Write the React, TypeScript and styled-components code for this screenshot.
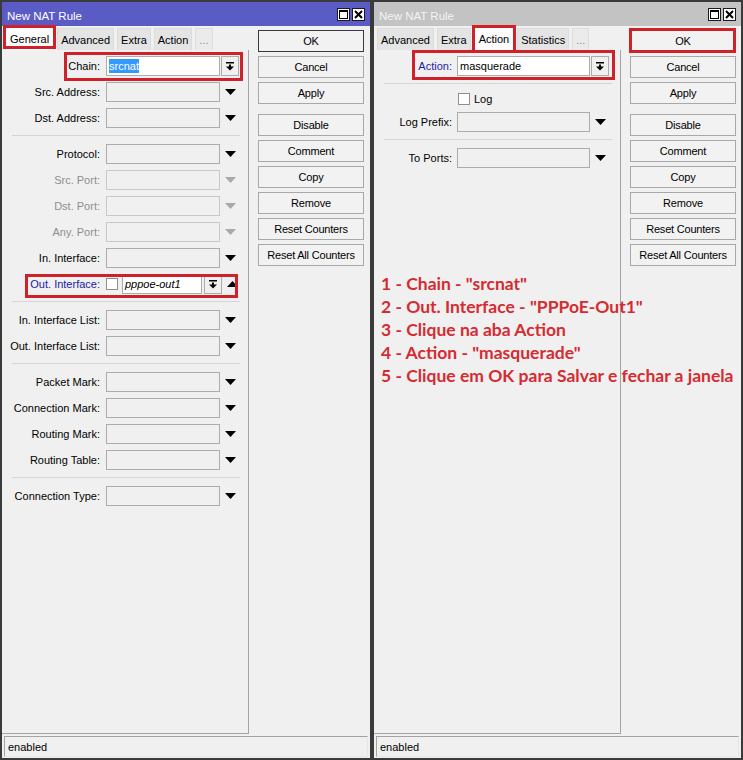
import React from 'react';
import styled, { createGlobalStyle } from 'styled-components';

const GlobalStyle = createGlobalStyle`
  html, body { margin: 0; padding: 0; background: #f0f0f0; }
  body {
    font-family: "Liberation Sans", Arial, sans-serif;
    font-size: 11px;
    color: #000;
  }
`;

const RED = '#cf2129';

const Desktop = styled.div`
  display: flex;
  width: 743px;
  height: 760px;
`;

const Win = styled.div<{ $w: number }>`
  position: relative;
  width: ${p => p.$w}px;
  height: 760px;
  box-sizing: border-box;
  border: 2px solid #3a3a3a;
  background: #f0f0f0;
  display: flex;
  flex-direction: column;
`;

const TitleBar = styled.div<{ $active: boolean }>`
  height: 24px;
  flex-shrink: 0;
  display: flex;
  align-items: center;
  justify-content: space-between;
  padding: 1px 5px 0 5px;
  box-sizing: border-box;
  background: ${p => (p.$active ? '#5b5bc6' : '#c3c3c3')};
  color: ${p => (p.$active ? '#ffffff' : '#f4f4f4')};
  font-size: 11.5px;
`;

const TitleText = styled.span`
  padding-top: 2px;
`;

const TitleButtons = styled.div`
  display: flex;
  gap: 2px;
`;

const TitleBtn = styled.div`
  width: 13px;
  height: 13px;
  box-sizing: border-box;
  border: 1px solid #1c1c1c;
  background: #fff;
  display: flex;
  align-items: center;
  justify-content: center;
`;

const Body = styled.div`
  flex: 1;
  min-height: 0;
  display: flex;
`;

const LeftCol = styled.div`
  width: 247px;
  flex-shrink: 0;
  display: flex;
  flex-direction: column;
`;

const TabStrip = styled.div`
  height: 24px;
  flex-shrink: 0;
  display: flex;
  align-items: flex-end;
  padding-left: 3px;
`;

const Tab = styled.div<{ $on?: boolean; $muted?: boolean }>`
  position: relative;
  box-sizing: border-box;
  height: ${p => (p.$on ? 24 : 22)}px;
  padding: 0 ${p => (p.$on ? 4 : 3)}px;
  margin-right: 3px;
  display: flex;
  align-items: center;
  border: 1px solid ${p => (p.$on ? '#d0d0d0' : '#dcdcdc')};
  border-bottom: none;
  background: ${p => (p.$on ? '#fbfbfb' : p.$muted ? '#ebebeb' : '#e4e4e4')};
  color: ${p => (p.$muted ? '#8c8c8c' : '#000')};
  z-index: ${p => (p.$on ? 1 : 0)};
`;

const Panel = styled.div`
  flex: 1;
  margin-bottom: 1px;
  border-right: 1px solid #a3a3a3;
  border-bottom: 1px solid #a3a3a3;
  padding-top: 3px;
`;

const Row = styled.div`
  position: relative;
  height: 26px;
  display: flex;
  align-items: center;
`;

const CheckRow = styled.div<{ $indent: number }>`
  height: 20px;
  display: flex;
  align-items: center;
  padding-left: ${p => p.$indent}px;
`;

const Label = styled.div<{ $w: number; $gap: number; $tone?: 'blue' | 'dim' }>`
  width: ${p => p.$w}px;
  margin-right: ${p => p.$gap}px;
  flex-shrink: 0;
  text-align: right;
  white-space: nowrap;
  color: ${p => (p.$tone === 'blue' ? '#1b1bab' : p.$tone === 'dim' ? '#8e8e8e' : '#000')};
`;

const Input = styled.div<{ $w: number; $white?: boolean; $dim?: boolean; $italic?: boolean }>`
  width: ${p => p.$w}px;
  height: 20px;
  box-sizing: border-box;
  flex-shrink: 0;
  border: 1px solid ${p => (p.$dim ? '#c9c9c9' : '#acacac')};
  background: ${p => (p.$white ? '#ffffff' : 'transparent')};
  padding: 0 2px;
  display: flex;
  align-items: center;
  font-style: ${p => (p.$italic ? 'italic' : 'normal')};
  white-space: nowrap;
`;

const Selected = styled.span`
  background: #3399ff;
  color: #fff;
  padding: 1px 0;
`;

const DropBtn = styled.div<{ $gap?: number }>`
  width: 18px;
  height: 20px;
  box-sizing: border-box;
  margin-left: ${p => p.$gap ?? 1}px;
  border: 1px solid #acacac;
  background: #f0f0f0;
  display: flex;
  align-items: center;
  justify-content: center;
  flex-shrink: 0;
`;

const ArrowSlot = styled.div`
  width: 20px;
  display: flex;
  justify-content: center;
  flex-shrink: 0;
`;

const Check = styled.div`
  width: 12px;
  height: 12px;
  box-sizing: border-box;
  border: 1px solid #8e8e8e;
  background: #fff;
  margin-right: 4px;
  flex-shrink: 0;
`;

const Sep = styled.div`
  height: 1px;
  background: #d6d6d6;
  margin: 4px 8px 5px 10px;
`;

const ButtonCol = styled.div`
  width: 106px;
  margin-left: 9px;
  padding-top: 4px;
  display: flex;
  flex-direction: column;
  gap: 4px;
`;

const Btn = styled.div<{ $default?: boolean; $spaced?: boolean }>`
  position: relative;
  height: 22px;
  box-sizing: border-box;
  border: 1px solid ${p => (p.$default ? '#3a3a3a' : '#a8a8a8')};
  background: #f2f2f2;
  margin-top: ${p => (p.$spaced ? 6 : 0)}px;
  display: flex;
  align-items: center;
  justify-content: center;
  font-size: 11px;
  letter-spacing: -0.2px;
`;

const StatusBar = styled.div`
  height: 21px;
  flex-shrink: 0;
  box-sizing: border-box;
  margin: 1px 2px 1px 2px;
  border: 1px solid;
  border-color: #a3a3a3 #e6e6e6 #e6e6e6 #a3a3a3;
  padding-left: 3px;
  display: flex;
  align-items: center;
`;

const Mark = styled.div<{ $t: number; $r: number; $b: number; $l: number }>`
  position: absolute;
  top: ${p => p.$t}px;
  right: ${p => p.$r}px;
  bottom: ${p => p.$b}px;
  left: ${p => p.$l}px;
  border: 3px solid ${RED};
  pointer-events: none;
  z-index: 2;
`;

const Notes = styled.div`
  position: absolute;
  top: 270px;
  left: 7px;
  font-family: Lato, "Open Sans", sans-serif;
  font-weight: 700;
  font-size: 17.5px;
  line-height: 23px;
  color: #d52b31;
  white-space: nowrap;
  z-index: 3;
`;

const Down = ({ dim }: { dim?: boolean }) => (
  <svg width="11" height="6" viewBox="0 0 11 6">
    <polygon points="0,0 11,0 5.5,6" fill={dim ? '#a9a9a9' : '#000'} />
  </svg>
);

const Up = () => (
  <svg width="11" height="6" viewBox="0 0 11 6">
    <polygon points="0,6 11,6 5.5,0" fill="#000" />
  </svg>
);

const DropIcon = () => (
  <svg width="8" height="9" viewBox="0 0 8 9">
    <rect x="0" y="0" width="8" height="1.5" fill="#000" />
    <rect x="3" y="2.5" width="2" height="2.5" fill="#000" />
    <polygon points="0,4.5 8,4.5 4,8.5" fill="#000" />
  </svg>
);

const MaxIcon = () => (
  <svg width="9" height="9" viewBox="0 0 9 9">
    <rect x="0.5" y="0.5" width="8" height="8" fill="none" stroke="#000" />
    <rect x="0" y="0" width="9" height="2" fill="#000" />
  </svg>
);

const CloseIcon = () => (
  <svg width="9" height="9" viewBox="0 0 9 9">
    <path d="M1 1 L8 8 M8 1 L1 8" stroke="#000" strokeWidth="2" />
  </svg>
);

type Field = {
  label: string;
  tone?: 'blue' | 'dim';
};

const Titled = ({ active }: { active: boolean }) => (
  <TitleBar $active={active}>
    <TitleText>New NAT Rule</TitleText>
    <TitleButtons>
      <TitleBtn><MaxIcon /></TitleBtn>
      <TitleBtn><CloseIcon /></TitleBtn>
    </TitleButtons>
  </TitleBar>
);

const buttons = ['OK', 'Cancel', 'Apply', 'Disable', 'Comment', 'Copy', 'Remove', 'Reset Counters', 'Reset All Counters'];

const Buttons = ({ markOk }: { markOk?: boolean }) => (
  <ButtonCol>
    {buttons.map(b => (
      <Btn key={b} $default={b === 'OK'} $spaced={b === 'Disable'}>
        {b}
        {b === 'OK' && markOk && <Mark $t={-3} $r={-1} $b={-2} $l={-2} />}
      </Btn>
    ))}
  </ButtonCol>
);

// left window (General tab)
const LW = 98;
const LG = 6;

const EmptyRow = ({ label, tone }: Field) => (
  <Row>
    <Label $w={LW} $gap={LG} $tone={tone}>{label}</Label>
    <Input $w={114} $dim={tone === 'dim'} />
    <ArrowSlot><Down dim={tone === 'dim'} /></ArrowSlot>
  </Row>
);

const group1: Field[] = [{ label: 'Src. Address:' }, { label: 'Dst. Address:' }];
const group2: Field[] = [
  { label: 'Protocol:' },
  { label: 'Src. Port:', tone: 'dim' },
  { label: 'Dst. Port:', tone: 'dim' },
  { label: 'Any. Port:', tone: 'dim' },
  { label: 'In. Interface:' },
];
const group3: Field[] = [{ label: 'In. Interface List:' }, { label: 'Out. Interface List:' }];
const group4: Field[] = [
  { label: 'Packet Mark:' },
  { label: 'Connection Mark:' },
  { label: 'Routing Mark:' },
  { label: 'Routing Table:' },
];

const GeneralWindow = () => (
  <Win $w={372}>
    <Titled active />
    <Body>
      <LeftCol>
        <TabStrip>
          <Tab $on>
            General
            <Mark $t={-2} $r={-3} $b={1} $l={-3} />
          </Tab>
          <Tab>Advanced</Tab>
          <Tab>Extra</Tab>
          <Tab>Action</Tab>
          <Tab $muted>...</Tab>
        </TabStrip>
        <Panel>
          <Row>
            <Label $w={LW} $gap={LG}>Chain:</Label>
            <Input $w={114} $white><Selected>srcnat</Selected></Input>
            <DropBtn><DropIcon /></DropBtn>
            <Mark $t={-1} $r={5} $b={-2} $l={62} />
          </Row>
          {group1.map(f => <EmptyRow key={f.label} {...f} />)}
          <Sep />
          {group2.map(f => <EmptyRow key={f.label} {...f} />)}
          <Row>
            <Label $w={LW} $gap={LG} $tone="blue">Out. Interface:</Label>
            <Check />
            <Input $w={80} $white $italic>pppoe-out1</Input>
            <DropBtn $gap={2}><DropIcon /></DropBtn>
            <ArrowSlot><Up /></ArrowSlot>
            <Mark $t={3} $r={10} $b={-1} $l={23} />
          </Row>
          <Sep />
          {group3.map(f => <EmptyRow key={f.label} {...f} />)}
          <Sep />
          {group4.map(f => <EmptyRow key={f.label} {...f} />)}
          <Sep />
          <EmptyRow label="Connection Type:" />
        </Panel>
      </LeftCol>
      <Buttons />
    </Body>
    <StatusBar>enabled</StatusBar>
  </Win>
);

// right window (Action tab)
const RW = 78;
const RG = 5;

const ActionWindow = () => (
  <Win $w={371}>
    <Titled active={false} />
    <Body>
      <LeftCol>
        <TabStrip>
          <Tab>Advanced</Tab>
          <Tab>Extra</Tab>
          <Tab $on>
            Action
            <Mark $t={-2} $r={-3} $b={-3} $l={-3} />
          </Tab>
          <Tab>Statistics</Tab>
          <Tab $muted>...</Tab>
        </TabStrip>
        <Panel>
          <Row>
            <Label $w={RW} $gap={RG} $tone="blue">Action:</Label>
            <Input $w={133} $white>masquerade</Input>
            <DropBtn><DropIcon /></DropBtn>
            <Mark $t={-3} $r={5} $b={-1} $l={38} />
          </Row>
          <Sep />
          <CheckRow $indent={RW + RG + 1}>
            <Check />
            Log
          </CheckRow>
          <Row>
            <Label $w={RW} $gap={RG}>Log Prefix:</Label>
            <Input $w={133} />
            <ArrowSlot><Down /></ArrowSlot>
          </Row>
          <Sep />
          <Row>
            <Label $w={RW} $gap={RG}>To Ports:</Label>
            <Input $w={133} />
            <ArrowSlot><Down /></ArrowSlot>
          </Row>
        </Panel>
      </LeftCol>
      <Buttons markOk />
    </Body>
    <StatusBar>enabled</StatusBar>
    <Notes>
      <div>1 - Chain - "srcnat"</div>
      <div>2 - Out. Interface - "PPPoE-Out1"</div>
      <div>3 - Clique na aba Action</div>
      <div>4 - Action - "masquerade"</div>
      <div>5 - Clique em OK para Salvar e fechar a janela</div>
    </Notes>
  </Win>
);

const App: React.FC = () => (
  <>
    <GlobalStyle />
    <Desktop>
      <GeneralWindow />
      <ActionWindow />
    </Desktop>
  </>
);

export default App;
